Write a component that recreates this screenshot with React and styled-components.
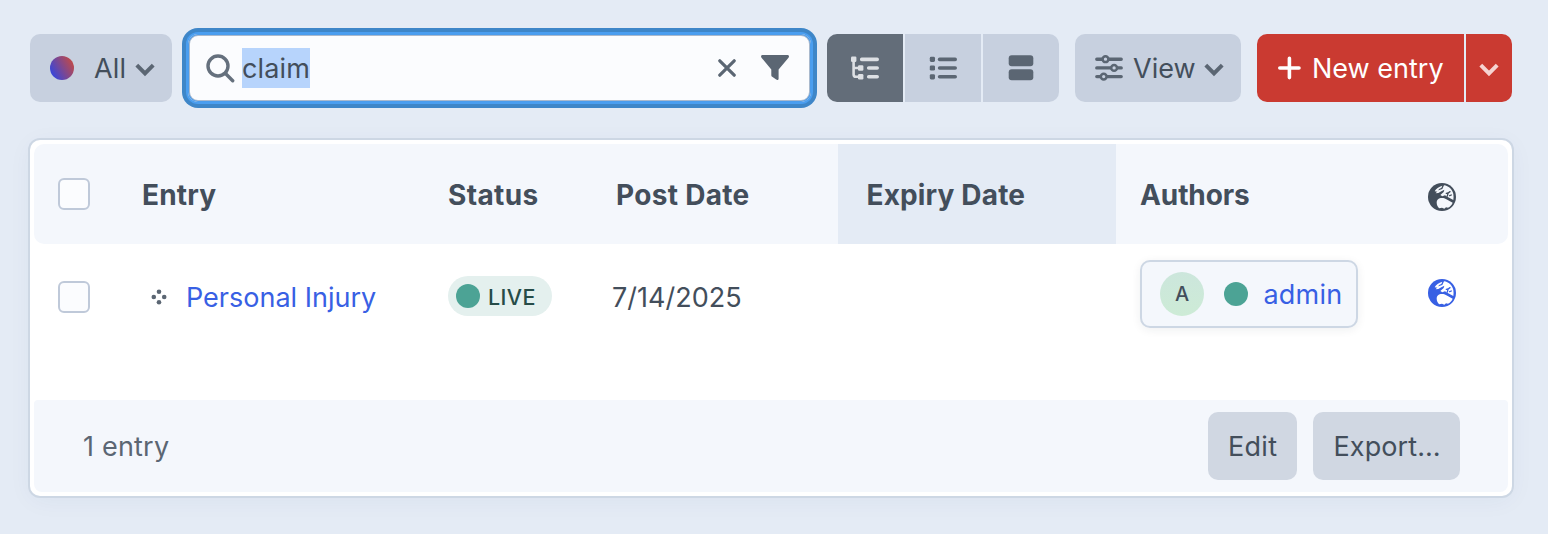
import React from "react";
import styled, { createGlobalStyle } from "styled-components";

const Global = createGlobalStyle`
  * { box-sizing: border-box; }
  body { margin: 0; background: #e4ebf5; }
  button { border: 0; margin: 0; padding: 0; font: inherit; color: inherit; }
  svg { display: block; flex: none; }
`;

const Page = styled.main`
  width: 1548px;
  height: 534px;
  padding: 34px 36px 36px 30px;
  display: flex;
  flex-direction: column;
  gap: 38px;
  background: #e4ebf5;
  color: #434e5b;
  font: 400 27px/40px Inter, "Liberation Sans", sans-serif;
  white-space: nowrap;
`;

const Toolbar = styled.div`
  display: flex;
  height: 68px;
`;

const Button = styled.button`
  display: flex;
  align-items: center;
  width: ${(p) => p.$width}px;
  height: 68px;
  padding-left: 20px;
  margin-right: ${(p) => p.$after || 0}px;
  border-radius: 10px;
  background: ${(p) => p.$bg || "#c7d0df"};
`;

const Label = styled.span`
  padding-top: 2px;
  letter-spacing: ${(p) => p.$track || 0}px;
  margin-left: ${(p) => p.$before || 0}px;
`;

const IconSlot = styled.span`
  padding-top: ${(p) => p.$drop || 0}px;
  margin-left: ${(p) => p.$before || 0}px;
`;

const StatusDot = styled.span`
  flex: none;
  width: 24px;
  height: 24px;
  border-radius: 50%;
  background: ${(p) => (p.$all ? "linear-gradient(60deg, #2f45e4 8%, #cc4a3c 95%)" : "#4ca395")};
`;

const Search = styled.div`
  display: flex;
  align-items: center;
  width: 623px;
  height: 68px;
  margin-right: 16px;
  padding: 0 22px 0 18px;
  border-radius: 10px;
  background: #fbfcfe;
  box-shadow: inset 0 0 0 1px #4b9cec, inset 0 0 0 2px #a9b9cd, 0 0 0 2px #4a9ef0, 0 0 0 6px #3e86c8;
`;

const Query = styled.span`
  flex: none;
  width: 68px;
  height: 40px;
  margin: 0 auto 0 7px;
  background: #b7d4fc;
  line-height: 42px;
  letter-spacing: 0.15px;
`;

const Segments = styled.div`
  display: flex;
  gap: 2px;
  margin-right: ${(p) => p.$after || 0}px;
  border-radius: 10px;
  overflow: hidden;
`;

const Segment = styled.button`
  display: flex;
  align-items: center;
  justify-content: ${(p) => (p.$start ? "flex-start" : "center")};
  padding-left: ${(p) => p.$start || 0}px;
  width: ${(p) => p.$width || 76}px;
  height: 68px;
  color: ${(p) => p.$color || "#5b6673"};
  background: ${(p) => p.$bg || "#c7d0df"};
`;

const Panel = styled.section`
  height: 356px;
  padding: 4px;
  border-radius: 10px;
  background: #fff;
  box-shadow: 0 0 0 2px #cdd7e4, 0 4px 24px rgba(31, 60, 110, 0.05);
`;

const Row = styled.div`
  display: grid;
  grid-template-columns: 108px 306px 164px 226px 278px 288px 104px;
  align-items: center;
  height: ${(p) => p.$height}px;
`;

const HeaderRow = styled(Row)`
  border-radius: 10px;
  background: #f4f7fc;
  font-size: 28px;
  font-weight: 700;
`;

const BodyRow = styled(Row)`
  margin-bottom: 50px;
`;

const Cell = styled.div`
  display: flex;
  align-items: center;
  align-self: stretch;
  padding-left: ${(p) => p.$pad || 0}px;
  padding-bottom: ${(p) => p.$lift || 0}px;
  padding-top: ${(p) => p.$drop || 0}px;
  background: ${(p) => (p.$hover ? "#e4ebf5" : "transparent")};
`;

const Checkbox = styled.span`
  width: 32px;
  height: 32px;
  border: 2px solid #bfc9d9;
  border-radius: 6px;
  background: #fbfcfe;
`;

const Link = styled(Label)`
  color: #3860e4;
`;

const LiveBadge = styled.span`
  display: flex;
  align-items: center;
  gap: 8px;
  width: 104px;
  height: 40px;
  padding-left: 8px;
  border-radius: 20px;
  background: #e4f0ee;
  color: #264c48;
  font-size: 21.5px;
  font-weight: 500;
`;

const AuthorChip = styled.div`
  display: flex;
  align-items: center;
  width: 218px;
  height: 68px;
  padding-left: 18px;
  border: 2px solid #cdd7e4;
  border-radius: 10px;
  background: #f4f7fc;
  box-shadow: 0 2px 10px rgba(31, 41, 60, 0.07);
`;

const Avatar = styled.span`
  width: 44px;
  height: 44px;
  margin-right: 20px;
  border-radius: 50%;
  background: linear-gradient(#cce6dc, #cdebd6);
  font-size: 20px;
  font-weight: 500;
  line-height: 45px;
  text-align: center;
`;

const Footer = styled.footer`
  display: flex;
  align-items: center;
  height: 92px;
  padding: 0 48px;
  border-radius: 4px 4px 8px 8px;
  background: #f4f7fc;
`;

const Count = styled(Label)`
  margin-right: auto;
  color: #5b6673;
`;

const Chevron = ({ color = "#5b6673" }) => (
  <svg width="20" height="14" viewBox="0 0 20 14" fill="none" stroke={color} strokeWidth="4">
    <path d="M1.8 2.2 10 10.4 18.2 2.2" />
  </svg>
);

const Magnifier = () => (
  <svg width="29" height="29" viewBox="0 0 29 29" fill="none" stroke="#65707d" strokeWidth="3.4" strokeLinecap="round">
    <circle cx="12" cy="12" r="10" />
    <path d="m19.5 19.5 7.2 7.2" />
  </svg>
);

const Clear = () => (
  <svg width="18" height="18" viewBox="0 0 18 18" stroke="#5b6673" strokeWidth="3.2" strokeLinecap="round">
    <path d="m1.8 1.8 14.4 14.4M16.2 1.8 1.8 16.2" />
  </svg>
);

const Funnel = () => (
  <svg width="28" height="26" viewBox="0 0 28 26" fill="#5b6673">
    <path d="M1.5 0h25c1.4 0 2 1.6 1 2.7L17.6 14.4v9.3c0 1.3-1.4 1.6-2.4.9l-4-2.8c-.6-.4-.9-.9-.9-1.6v-5.8L.5 2.7C-.4 1.6.1 0 1.5 0Z" />
  </svg>
);

const TreeIcon = () => (
  <svg width="28" height="25" viewBox="0 0 28 25" fill="none" stroke="currentColor" strokeWidth="3.6" strokeLinecap="round">
    <path d="M10.7 3.4h15.5M17.7 12h8.5M17.7 20.8h8.5" />
    <path d="M2.6 3v15.4c0 1.6.8 2.4 2.4 2.4h5M2.6 12H10" strokeWidth="2.6" />
    <g fill="currentColor" stroke="none">
      <rect x="0" y="0.6" width="5.4" height="5.4" rx="1.2" />
      <rect x="7" y="9.3" width="5.4" height="5.4" rx="1.2" />
      <rect x="7" y="18.1" width="5.4" height="5.4" rx="1.2" />
    </g>
  </svg>
);

const ListIcon = () => (
  <svg width="28" height="25" viewBox="0 0 28 25" fill="currentColor">
    {[3.4, 12, 20.8].map((y) => (
      <g key={y}>
        <rect x="0.8" y={y - 2.6} width="5.2" height="5.2" rx="1.4" />
        <rect x="8.8" y={y - 1.8} width="19.2" height="3.6" rx="1.8" />
      </g>
    ))}
  </svg>
);

const CardsIcon = () => (
  <svg width="26" height="26" viewBox="0 0 26 26" fill="currentColor">
    <rect x="0.7" y="0.2" width="24.6" height="11" rx="3" />
    <rect x="0.7" y="14.2" width="24.6" height="11" rx="3" />
  </svg>
);

const SlidersIcon = () => (
  <svg width="28" height="26" viewBox="0 0 28 26" fill="#c7d0df" stroke="#5b6673" strokeWidth="3.4" strokeLinecap="round">
    <path d="M1.8 4.2h24.4M1.8 12.9h24.4M1.8 21.6h24.4" />
    <circle cx="10.5" cy="4.2" r="2.9" strokeWidth="2.5" />
    <circle cx="19.1" cy="12.9" r="2.9" strokeWidth="2.5" />
    <circle cx="8.7" cy="21.6" r="2.9" strokeWidth="2.5" />
  </svg>
);

const PlusIcon = () => (
  <svg width="24" height="24" viewBox="0 0 24 24" stroke="#fff" strokeWidth="3.6" strokeLinecap="round">
    <path d="M12.4 2.4v19.2M2.8 12h19.2" />
  </svg>
);

const DragIcon = () => (
  <svg width="16" height="16" viewBox="0 0 16 16" fill="#5b6673">
    <circle cx="8" cy="2.8" r="2.3" />
    <circle cx="2.8" cy="8" r="2.3" />
    <circle cx="13.2" cy="8" r="2.3" />
    <circle cx="8" cy="13.2" r="2.3" />
  </svg>
);

const Globe = ({ color, paper }) => (
  <svg width="28" height="28" viewBox="0 0 84 84">
    <circle cx="42" cy="42" r="42" fill={color} />
    <g fill={paper}>
      <path d="M26 58c0-7 5-12 12-13 6-1 12 0 17 4l19 10c-3 7-8 12-14 15l-6-1-5 4-7-3-8 2c-5-4-8-10-8-18Z" />
      <path d="M20 25c4-8 12-14 23-17l-3 7-7 3-4 8Z" />
      <path d="M48 7c14 2 25 12 28 26 1 6 1 12 0 18L58 41l-7-4-8 3-6-4 10-9 2-7-9 5-9 5-8 1 8-9 12-4Z" />
    </g>
    <g fill="none" stroke={color} strokeWidth="4" strokeLinecap="round">
      <path d="m55 31 5-1 6-4M60 31l-2 8M65 38l5-2" />
    </g>
  </svg>
);

export default function App() {
  return (
    <Page>
      <Global />
      <Toolbar>
        <Button $width={142} $after={16}>
          <StatusDot $all />
          <Label $before={20} $track={0.15}>All</Label>
          <IconSlot $before={8.5} $drop={3}><Chevron /></IconSlot>
        </Button>
        <Search>
          <Magnifier />
          <Query>claim</Query>
          <Clear />
          <IconSlot $before={25}><Funnel /></IconSlot>
        </Search>
        <Segments $after={16}>
          <Segment $bg="#636d79" $color="#dde0e4"><TreeIcon /></Segment>
          <Segment><ListIcon /></Segment>
          <Segment><CardsIcon /></Segment>
        </Segments>
        <Button $width={166} $after={16}>
          <SlidersIcon />
          <Label $before={10}>View</Label>
          <IconSlot $before={8} $drop={3}><Chevron /></IconSlot>
        </Button>
        <Segments>
          <Segment $width={207} $start={20} $bg="#ca3a31" $color="#fff">
            <PlusIcon />
            <Label $before={11}>New entry</Label>
          </Segment>
          <Segment $width={46} $bg="#ca3a31"><IconSlot $drop={3}><Chevron color="#f6d3d1" /></IconSlot></Segment>
        </Segments>
      </Toolbar>
      <Panel>
        <HeaderRow $height={100}>
          <Cell $pad={24}><Checkbox /></Cell>
          <Cell><Label $track={0.15}>Entry</Label></Cell>
          <Cell><Label $track={0.35}>Status</Label></Cell>
          <Cell $pad={4}><Label $track={0.3}>Post Date</Label></Cell>
          <Cell $pad={28} $hover><Label $before={0.5} $track={0.15}>Expiry Date</Label></Cell>
          <Cell $pad={24}><Label $track={-0.1}>Authors</Label></Cell>
          <Cell $pad={24} $drop={5}><Globe color="#434e5b" paper="#f4f7fc" /></Cell>
        </HeaderRow>
        <BodyRow $height={106}>
          <Cell $pad={24}><Checkbox /></Cell>
          <Cell $pad={9}>
            <DragIcon />
            <Link $before={19}>Personal Injury</Link>
          </Cell>
          <Cell $lift={2}>
            <LiveBadge><StatusDot /><Label $track={0.4}>LIVE</Label></LiveBadge>
          </Cell>
          <Cell><Label>7/14/2025</Label></Cell>
          <Cell />
          <Cell $pad={24} $lift={6}>
            <AuthorChip>
              <Avatar>A</Avatar>
              <StatusDot />
              <Link $before={15.5} $track={0.2}>admin</Link>
            </AuthorChip>
          </Cell>
          <Cell $pad={24} $lift={8}><Globe color="#3860e4" paper="#fff" /></Cell>
        </BodyRow>
        <Footer>
          <Count $before={1} $track={0.2}>1 entry</Count>
          <Button $width={89} $after={16} $bg="#d0d7e2"><Label $track={0.3}>Edit</Label></Button>
          <Button $width={147} $bg="#d0d7e2"><Label $before={0.5} $track={0.1}>Export…</Label></Button>
        </Footer>
      </Panel>
    </Page>
  );
}
